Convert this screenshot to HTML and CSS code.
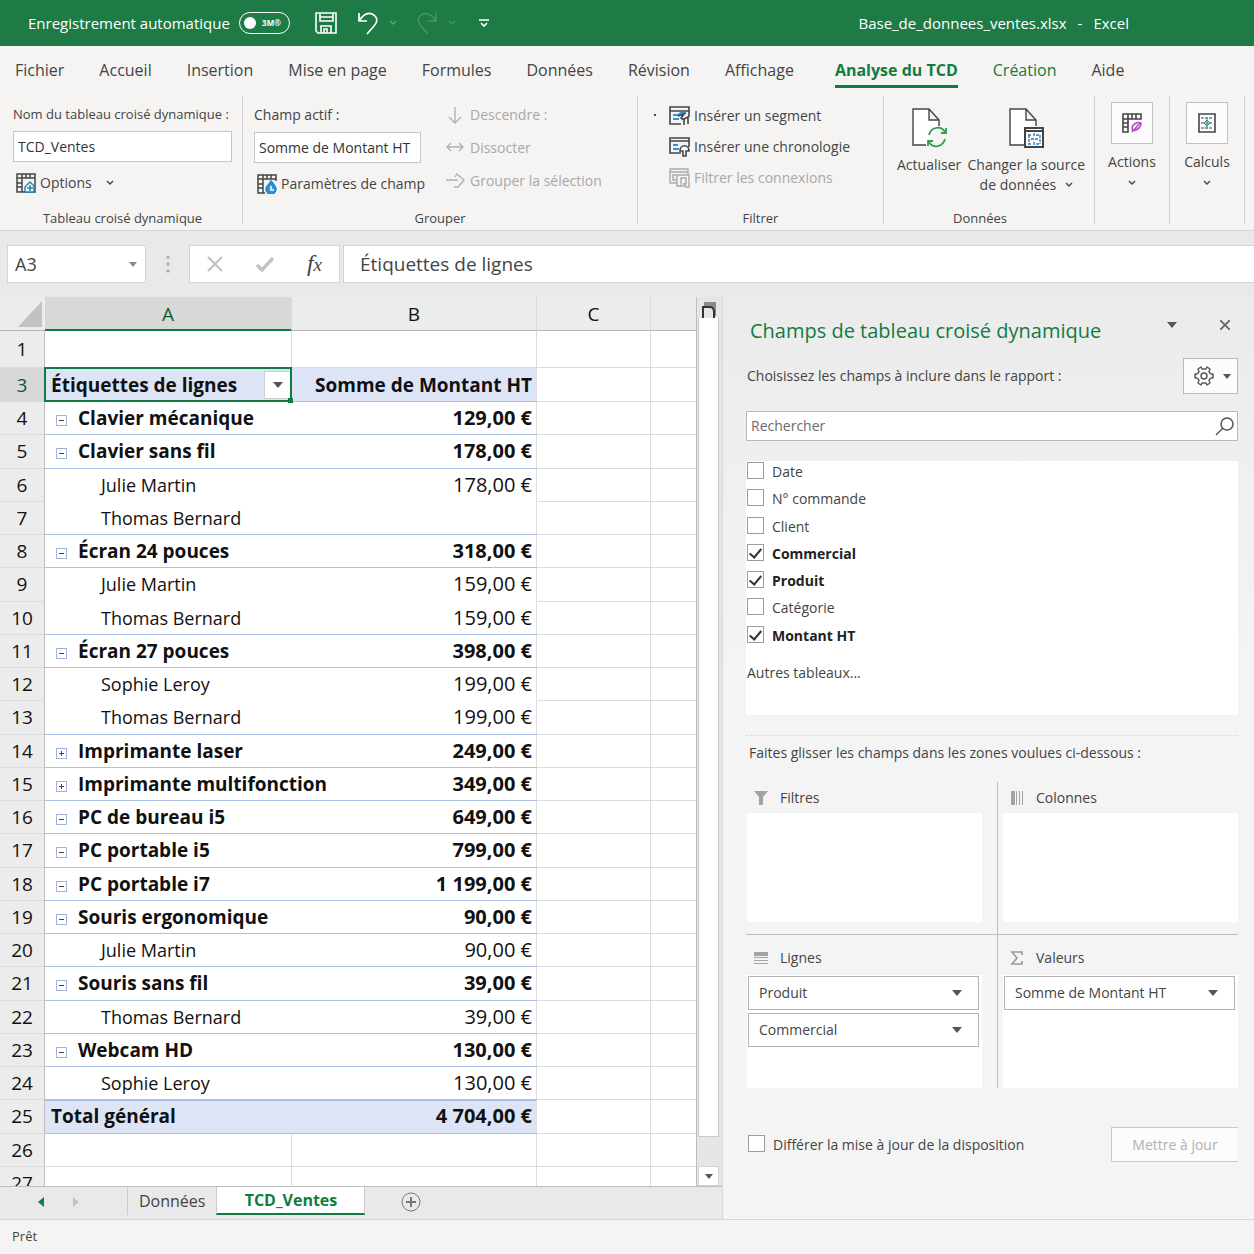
FILE: index.html
```html
<!DOCTYPE html>
<html lang="fr">
<head>
	<meta charset="UTF-8">
	<meta name="viewport" content="width=device-width, initial-scale=1">
	<title>Base_de_donnees_ventes.xlsx - Excel</title>
	<link rel="stylesheet" href="styles.css">
</head>
<body>
	<header class="titlebar">
		<span>Enregistrement automatique</span>
		<button class="autosave" aria-label="Enregistrement automatique"><span class="autosave-knob"></span><span class="autosave-text">3M®</span></button>
		<button class="save" aria-label="Enregistrer">
			<svg width="24" height="24" viewBox="0 0 24 24" fill="none" stroke="#fff" stroke-width="1.6"><path d="M2 2h20v20H4l-2-2zM6 2v8h13V2M7 22v-7h10v7M10 22v-4h3v4M6 6h13"/></svg>
		</button>
		<button class="undo" aria-label="Annuler">
			<svg width="22" height="24" viewBox="0 0 22 24" fill="none" stroke="#fff" stroke-width="1.7"><path d="M2 2v8h8M2 10C6 4 10 1 15 3c6 3 6 8 2 12l-7 8"/></svg>
		</button>
		<svg class="tb-chevron" width="8" height="6" viewBox="0 0 8 6" fill="none" stroke="#5fa37c" stroke-width="1.4"><path d="M1 1l3 3 3-3"/></svg>
		<button class="redo" aria-label="Rétablir">
			<svg width="22" height="24" viewBox="0 0 22 24" fill="none" stroke="#4a9469" stroke-width="1.4"><path d="M20 2v8h-8M20 10C16 4 12 1 7 3c-6 3-6 8-2 12l7 8"/></svg>
		</button>
		<svg class="tb-chevron" width="8" height="6" viewBox="0 0 8 6" fill="none" stroke="#4a9469" stroke-width="1.4"><path d="M1 1l3 3 3-3"/></svg>
		<button class="customize" aria-label="Personnaliser">
			<svg width="10" height="9" viewBox="0 0 10 9" fill="none" stroke="#fff" stroke-width="1.6"><path d="M0 1h10M2 4l3 3 3-3"/></svg>
		</button>
		<div class="file-name"><span>Base_de_donnees_ventes.xlsx</span><span>-</span><span>Excel</span></div>
	</header>

	<nav class="tabs">
		<a href="#">Fichier</a>
		<a href="#">Accueil</a>
		<a href="#">Insertion</a>
		<a href="#">Mise en page</a>
		<a href="#">Formules</a>
		<a href="#">Données</a>
		<a href="#">Révision</a>
		<a href="#">Affichage</a>
		<a href="#" class="active">Analyse du TCD</a>
		<a href="#" class="context">Création</a>
		<a href="#">Aide</a>
	</nav>

	<div class="ribbon">
		<section class="group group-pivot">
			<div class="group-body">
				<label for="pivot-name">Nom du tableau croisé dynamique :</label>
				<input id="pivot-name" type="text" value="TCD_Ventes">
				<button class="cmd">
					<svg width="20" height="20" viewBox="0 0 20 20" fill="none" stroke="#444" stroke-width="1.5"><path d="M1 1h18v18H1zM1 5h18M6 1v18M10 1v4M14 1v4M1 10h5M1 14h5"/><path d="M9 19h9v-6l-4-4-5 5z" fill="#fff" stroke="#1f86b8"/><path d="M11 15h6M14 12v6" stroke="#1f86b8"/></svg>
					Options
					<svg class="chevron" width="8" height="6" viewBox="0 0 8 6"><path d="M1 1l3 3 3-3"/></svg>
				</button>
			</div>
			<h2>Tableau croisé dynamique</h2>
		</section>

		<section class="group group-field">
			<div class="group-columns">
				<div class="group-body">
					<label for="active-field">Champ actif :</label>
					<input id="active-field" type="text" value="Somme de Montant HT">
					<button class="cmd">
						<svg width="20" height="20" viewBox="0 0 20 20" fill="none" stroke="#444" stroke-width="1.5"><path d="M19 7V1H1v18h7M1 5h18M6 1v18M10 1v4M14 1v4M1 10h5M1 14h5"/><path d="M14 7c3 4 5 5 5 8a5 5 0 0 1-10 0c0-3 3-4 5-8z" fill="#2b95dd" stroke="#1d84cf"/><path d="M14 12v4h3" stroke="#fff"/></svg>
						Paramètres de champ
					</button>
				</div>
				<div class="cmd-list drill">
					<button class="cmd" disabled>
						<svg width="20" height="20" viewBox="0 0 20 20" fill="none" stroke="#b0b0b0" stroke-width="1.3"><path d="M10 2v16M4 12l6 6 6-6"/></svg>
						Descendre :
					</button>
					<button class="cmd" disabled>
						<svg width="20" height="20" viewBox="0 0 20 20" fill="none" stroke="#b0b0b0" stroke-width="1.3"><path d="M2 9h16M6 5L2 9l4 4M14 5l4 4-4 4"/></svg>
						Dissocter
					</button>
					<button class="cmd" disabled>
						<svg width="20" height="20" viewBox="0 0 20 20" fill="none" stroke="#b0b0b0" stroke-width="1.3"><path d="M1 9h12M10 6l2-3 7 6-6 7H9"/></svg>
						Grouper la sélection
					</button>
				</div>
			</div>
			<h2>Grouper</h2>
		</section>

		<section class="group group-filter">
			<div class="cmd-list">
				<button class="cmd">
					<svg width="21" height="20" viewBox="0 0 21 20" fill="none" stroke="#444" stroke-width="1.6"><path d="M12 18H1V1h19v10M1 5h19"/><path d="M4 9h5l3-2h5M4 13h6" stroke="#2b95dd" stroke-width="2"/><path d="M9 10l6-2-3 4 3 2M15 19v-6l4-2v7"/></svg>
					Insérer un segment
				</button>
				<button class="cmd">
					<svg width="21" height="20" viewBox="0 0 21 20" fill="none" stroke="#444" stroke-width="1.6"><path d="M12 16H1V1h19v9M1 4h19"/><path d="M4 8h5M4 12h6" stroke="#2b95dd" stroke-width="2"/><path d="M14 19v-5h-3c0-7 9-7 9 0h-3v5z" fill="#fff"/></svg>
					Insérer une chronologie
				</button>
				<button class="cmd" disabled>
					<svg width="21" height="20" viewBox="0 0 21 20" fill="none" stroke="#ababab" stroke-width="1.4"><path d="M8 15H1V1h18v6M1 4h18M8 7H4v5h4M8 7h12v12h-4M8 7v11h4V10h5v6h-3M12 18h4v-3"/></svg>
					Filtrer les connexions
				</button>
			</div>
			<h2>Filtrer</h2>
		</section>

		<section class="group group-data">
			<div class="group-columns">
				<button class="big">
					<svg width="38" height="40" viewBox="0 0 38 40" fill="none" stroke="#444" stroke-width="1.4"><path d="M16 37H3V1h16l10 11v6M19 1v11h10" fill="#fff"/><g stroke="#2f9e4f" stroke-width="1.8"><path d="M19 27c2-8 12-10 16-3M36 20v5h-5M35 31c-2 8-12 10-16 3M18 38v-5h5"/></g></svg>
					<span>Actualiser</span>
				</button>
				<button class="big">
					<svg width="38" height="40" viewBox="0 0 38 40" fill="none" stroke="#444" stroke-width="1.4"><path d="M18 37H3V1h16l10 11v6M19 1v11h10" fill="#fff"/><path d="M18 20h18v19H18z" fill="#fff" stroke-width="2"/><path d="M18 23h18" stroke-width="2"/><path d="M21 27h3M29 27h4M22 27v9M33 27v9M21 36h4M29 36h4M27 25v4M27 34v4M24 31h7" stroke="#2680c8" stroke-dasharray="3 1"/></svg>
					<span>Changer la source<br>de données <svg class="chevron" width="8" height="6" viewBox="0 0 8 6"><path d="M1 1l3 3 3-3"/></svg></span>
				</button>
			</div>
			<h2>Données</h2>
		</section>

		<section class="group group-menu">
			<button class="big">
				<span class="tile"><svg width="20" height="20" viewBox="0 0 20 20" fill="none" stroke="#444" stroke-width="1.6"><path d="M1 1h18v5H1zM1 1v18h5V1M10 1v5M14 1v5M1 10h5M1 14h5"/><path d="M11 18c-3-5 3-10 8-8 0 5-4 7-8 8l7-8" stroke="#b64fc8"/></svg></span>
				<span>Actions</span>
				<svg class="chevron" width="8" height="6" viewBox="0 0 8 6"><path d="M1 1l3 3 3-3"/></svg>
			</button>
		</section>

		<section class="group group-menu">
			<button class="big">
				<span class="tile"><svg width="18" height="20" viewBox="0 0 18 20" fill="none" stroke="#444" stroke-width="1.6"><path d="M1 1h16v18H1z"/><path d="M3 5h12M3 10h12M3 15h12" stroke-width="1.2" stroke-dasharray="3 1"/><path d="M9 4v12M6 10l3-3 3 3-3 3z" stroke="#3b8f8c" stroke-width="1" fill="#8fd0cc"/></svg></span>
				<span>Calculs</span>
				<svg class="chevron" width="8" height="6" viewBox="0 0 8 6"><path d="M1 1l3 3 3-3"/></svg>
			</button>
		</section>
	</div>

	<div class="formula-bar">
		<div class="name-box">
			<input type="text" value="A3" aria-label="Zone Nom">
			<span class="caret light"></span>
		</div>
		<svg class="dots" width="4" height="18" viewBox="0 0 4 18" fill="#a6a6a6"><circle cx="2" cy="2" r="1.6"/><circle cx="2" cy="9" r="1.6"/><circle cx="2" cy="16" r="1.6"/></svg>
		<div class="formula-buttons">
			<button aria-label="Annuler"><svg width="18" height="16" viewBox="0 0 18 16" fill="none" stroke="#c3c3c3" stroke-width="2.4"><path d="M2 1l14 14M16 1L2 15"/></svg></button>
			<button aria-label="Entrer"><svg width="18" height="16" viewBox="0 0 18 16" fill="none" stroke="#c3c3c3" stroke-width="3.4"><path d="M1 9l5 5L17 2"/></svg></button>
			<button class="fx" aria-label="Insérer une fonction">f<small>x</small></button>
		</div>
		<input class="formula" type="text" value="Étiquettes de lignes" aria-label="Barre de formule">
	</div>

	<main class="workspace">
		<div class="book">
			<div class="sheet">
				<div class="grid">
					<table class="cells">
						<colgroup><col class="col-head"><col class="col-a"><col class="col-b"><col class="col-c"><col></colgroup>
						<thead>
							<tr><th class="corner"><svg width="24" height="26" viewBox="0 0 24 26"><path d="M24 0v26H0z" fill="#c2c2c2"/></svg></th><th class="selected">A</th><th>B</th><th>C</th><th></th></tr>
						</thead>
						<tbody>
							<tr class="first"><th>1</th><td></td><td></td><td></td><td></td></tr>
							<tr class="heading"><th class="selected">3</th><td class="active-cell"><div class="label">Étiquettes de lignes<button class="filter" aria-label="Filtrer les étiquettes"><span class="caret"></span></button></div></td><td>Somme de Montant HT</td><td></td><td></td></tr>
							<tr class="item"><th>4</th><td><button class="toggle minus" aria-label="Réduire"></button>Clavier mécanique</td><td>129,00 €</td><td></td><td></td></tr>
							<tr class="item"><th>5</th><td><button class="toggle minus" aria-label="Réduire"></button>Clavier sans fil</td><td>178,00 €</td><td></td><td></td></tr>
							<tr class="sub"><th>6</th><td>Julie Martin</td><td>178,00 €</td><td></td><td></td></tr>
							<tr class="sub last"><th>7</th><td>Thomas Bernard</td><td></td><td></td><td></td></tr>
							<tr class="item"><th>8</th><td><button class="toggle minus" aria-label="Réduire"></button>Écran 24 pouces</td><td>318,00 €</td><td></td><td></td></tr>
							<tr class="sub"><th>9</th><td>Julie Martin</td><td>159,00 €</td><td></td><td></td></tr>
							<tr class="sub last"><th>10</th><td>Thomas Bernard</td><td>159,00 €</td><td></td><td></td></tr>
							<tr class="item"><th>11</th><td><button class="toggle minus" aria-label="Réduire"></button>Écran 27 pouces</td><td>398,00 €</td><td></td><td></td></tr>
							<tr class="sub"><th>12</th><td>Sophie Leroy</td><td>199,00 €</td><td></td><td></td></tr>
							<tr class="sub last"><th>13</th><td>Thomas Bernard</td><td>199,00 €</td><td></td><td></td></tr>
							<tr class="item"><th>14</th><td><button class="toggle plus" aria-label="Développer"></button>Imprimante laser</td><td>249,00 €</td><td></td><td></td></tr>
							<tr class="item"><th>15</th><td><button class="toggle plus" aria-label="Développer"></button>Imprimante multifonction</td><td>349,00 €</td><td></td><td></td></tr>
							<tr class="item"><th>16</th><td><button class="toggle minus" aria-label="Réduire"></button>PC de bureau i5</td><td>649,00 €</td><td></td><td></td></tr>
							<tr class="item"><th>17</th><td><button class="toggle minus" aria-label="Réduire"></button>PC portable i5</td><td>799,00 €</td><td></td><td></td></tr>
							<tr class="item"><th>18</th><td><button class="toggle minus" aria-label="Réduire"></button>PC portable i7</td><td>1 199,00 €</td><td></td><td></td></tr>
							<tr class="item"><th>19</th><td><button class="toggle minus" aria-label="Réduire"></button>Souris ergonomique</td><td>90,00 €</td><td></td><td></td></tr>
							<tr class="sub last"><th>20</th><td>Julie Martin</td><td>90,00 €</td><td></td><td></td></tr>
							<tr class="item"><th>21</th><td><button class="toggle minus" aria-label="Réduire"></button>Souris sans fil</td><td>39,00 €</td><td></td><td></td></tr>
							<tr class="sub last"><th>22</th><td>Thomas Bernard</td><td>39,00 €</td><td></td><td></td></tr>
							<tr class="item"><th>23</th><td><button class="toggle minus" aria-label="Réduire"></button>Webcam HD</td><td>130,00 €</td><td></td><td></td></tr>
							<tr class="sub last"><th>24</th><td>Sophie Leroy</td><td>130,00 €</td><td></td><td></td></tr>
							<tr class="total"><th>25</th><td>Total général</td><td>4 704,00 €</td><td></td><td></td></tr>
							<tr><th>26</th><td></td><td></td><td></td><td></td></tr>
							<tr><th>27</th><td></td><td></td><td></td><td></td></tr>
						</tbody>
					</table>
				</div>
				<div class="scrollbar">
					<svg width="14" height="16" viewBox="0 0 14 16" fill="none"><path d="M2 0h12v14h-2V5H2z" fill="#8a8a8a"/><path d="M1 16V5h7c3 0 4 2 4 5v6" stroke="#333" stroke-width="2"/></svg>
					<div class="thumb"></div>
					<button aria-label="Défiler vers le bas"><span class="caret small"></span></button>
				</div>
			</div>
			<div class="sheet-tabs">
				<button class="prev" aria-label="Feuille précédente"><svg width="6" height="10" viewBox="0 0 6 10"><path d="M6 0v10L0 5z" fill="#107c41"/></svg></button>
				<button class="next" aria-label="Feuille suivante"><svg width="6" height="10" viewBox="0 0 6 10"><path d="M0 0v10l6-5z" fill="#c4c4c4"/></svg></button>
				<a href="#">Données</a>
				<a href="#" class="active">TCD_Ventes</a>
				<button class="add" aria-label="Nouvelle feuille"><svg width="20" height="20" viewBox="0 0 20 20" fill="none" stroke="#777"><circle cx="10" cy="10" r="9"/><path d="M10 5v10M5 10h10" stroke-width="2"/></svg></button>
			</div>
		</div>

		<aside class="pane">
			<div class="pane-title">
				<h1>Champs de tableau croisé dynamique</h1>
				<button class="pane-menu" aria-label="Options du volet"><span class="caret"></span></button>
				<button class="pane-close" aria-label="Fermer"><svg width="10" height="10" viewBox="0 0 10 10" stroke="#666" stroke-width="1.8"><path d="M0 0l10 10M10 0L0 10"/></svg></button>
			</div>
			<div class="pane-hint">
				<span>Choisissez les champs à inclure dans le rapport :</span>
				<button class="gear" aria-label="Outils">
					<svg width="20" height="20" viewBox="0 0 20 20" fill="none" stroke="#555" stroke-width="1.4" stroke-linejoin="round"><path d="M7 1l1 2h4l1-2 3 2-1 3 2 2h2v4h-2l-2 2 1 3-3 2-1-2H8l-1 2-3-2 1-3-2-2H1V8h2l2-2-1-3z"/><circle cx="10" cy="10" r="3"/></svg>
					<span class="caret small"></span>
				</button>
			</div>
			<div class="search">
				<input type="search" placeholder="Rechercher" aria-label="Rechercher">
				<svg width="20" height="20" viewBox="0 0 20 20" fill="none" stroke="#555" stroke-width="1.5"><circle cx="12" cy="8" r="6"/><path d="M8 12l-7 7"/></svg>
			</div>
			<div class="fields">
				<div class="field-list">
					<label><input type="checkbox">Date</label>
					<label><input type="checkbox">N° commande</label>
					<label><input type="checkbox">Client</label>
					<label><input type="checkbox" checked>Commercial</label>
					<label><input type="checkbox" checked>Produit</label>
					<label><input type="checkbox">Catégorie</label>
					<label><input type="checkbox" checked>Montant HT</label>
				</div>
				<a href="#">Autres tableaux...</a>
			</div>
			<p class="drag-hint">Faites glisser les champs dans les zones voulues ci-dessous :</p>
			<div class="zones">
				<section class="zone">
					<h3><svg width="14" height="14" viewBox="0 0 14 14" fill="#a3a3a3"><path d="M0 0h14L9 6v8H5V6z"/></svg>Filtres</h3>
					<div class="drop"></div>
				</section>
				<section class="zone">
					<h3><svg width="14" height="14" viewBox="0 0 14 14" fill="#a3a3a3"><path d="M1 0h4v14H1zM6 0h1v14H6zM9 0h1v14H9zM12 0h1v14h-1z"/></svg>Colonnes</h3>
					<div class="drop"></div>
				</section>
				<section class="zone">
					<h3><svg width="14" height="14" viewBox="0 0 14 14" fill="#a3a3a3"><path d="M0 1h14v4H0zM0 6h14v1H0zM0 9h14v1H0zM0 12h14v1H0z"/></svg>Lignes</h3>
					<div class="drop">
						<div class="pill"><select aria-label="Lignes 1"><option>Produit</option></select><span class="caret"></span></div>
						<div class="pill"><select aria-label="Lignes 2"><option>Commercial</option></select><span class="caret"></span></div>
					</div>
				</section>
				<section class="zone">
					<h3><svg width="14" height="14" viewBox="0 0 14 14" fill="none" stroke="#999" stroke-width="1.6"><path d="M12 4V1H2l5 6-5 6h10v-3"/></svg>Valeurs</h3>
					<div class="drop">
						<div class="pill"><select aria-label="Valeurs 1"><option>Somme de Montant HT</option></select><span class="caret"></span></div>
					</div>
				</section>
			</div>
			<div class="pane-footer">
				<label><input type="checkbox">Différer la mise à jour de la disposition</label>
				<button class="update" disabled>Mettre à jour</button>
			</div>
		</aside>
	</main>

	<footer class="status">Prêt</footer>
</body>
</html>
```
FILE: styles.css
```css
* {
	box-sizing: border-box;
}

body {
	margin: 0;
	height: 100vh;
	display: flex;
	flex-direction: column;
	overflow: hidden;
	background: #f5f4f3;
	color: #444;
	font: 14px/20px "Open Sans", "Noto Sans", sans-serif;
}

button,
input,
select {
	font: inherit;
	color: inherit;
	margin: 0;
}

button {
	padding: 0;
	border: 0;
	background: none;
}

h1, h2, h3, p {
	margin: 0;
	font-weight: 400;
}

a {
	color: inherit;
	text-decoration: none;
}

svg {
	display: block;
	flex: none;
}

.caret {
	flex: none;
	border: 5px solid transparent;
	border-top: 6px solid #555;
	border-bottom: 0;
}

.caret.small {
	border-width: 5px 4px 0;
}

.caret.light {
	border-top-color: #888;
	border-width: 5px 4px 0;
}

.chevron {
	fill: none;
	stroke: #444;
	stroke-width: 1.4;
}

/* title bar */
.titlebar {
	height: 46px;
	flex: none;
	display: flex;
	align-items: center;
	padding: 0 28px;
	background: #1e7b45;
	color: #fff;
	font-size: 15px;
}

.autosave {
	width: 51px;
	height: 22px;
	margin-left: 9px;
	padding: 0 8px 0 4px;
	display: flex;
	align-items: center;
	justify-content: space-between;
	border: 1px solid #fff;
	border-radius: 11px;
}

.autosave-knob {
	width: 12px;
	height: 12px;
	border-radius: 50%;
	background: #fff;
}

.autosave-text {
	font-size: 8px;
	line-height: 10px;
	font-weight: 700;
}

.save {
	margin-left: 24px;
}

.undo,
.redo {
	margin-left: 19px;
}

.tb-chevron {
	margin-left: 10px;
}

.customize {
	margin-left: 23px;
}

.file-name {
	display: flex;
	gap: 11px;
	margin-left: auto;
	margin-right: 97px;
}

/* ribbon tabs */
.tabs {
	height: 48px;
	flex: none;
	display: flex;
	align-items: flex-start;
	gap: 35px;
	padding: 9px 15px 0;
	font-size: 16px;
	line-height: 30px;
	white-space: nowrap;
}

.tabs a {
	height: 33px;
}

.tabs .active {
	margin-left: 6px;
	font-weight: 700;
	color: #107c41;
	border-bottom: 3px solid #107c41;
}

.tabs .context {
	color: #107c41;
}

/* ribbon */
.ribbon {
	height: 137px;
	flex: none;
	display: flex;
	padding: 2px 0 6px;
	border-bottom: 1px solid #d6d6d6;
	white-space: nowrap;
}

.group {
	display: flex;
	flex-direction: column;
	justify-content: space-between;
	border-right: 1px solid #cfcfcf;
}

.group h2 {
	font-size: 13px;
	line-height: 12px;
	text-align: center;
}

.group-pivot {
	width: 243px;
	padding: 8px 10px 0 13px;
}

.group-field {
	width: 395px;
	padding: 9px 0 0 11px;
}

.group-field h2 {
	padding-right: 11px;
}

.group-filter {
	position: relative;
	width: 246px;
	padding: 10px 0 0 31px;
}

.group-filter::before {
	content: "";
	position: absolute;
	top: 18px;
	left: 16px;
	width: 2px;
	height: 2px;
	background: #444;
}

.group-filter h2 {
	margin-left: -31px;
}

.group-data {
	width: 211px;
	padding: 12px 9px 0 13px;
}

.group-data h2 {
	padding-right: 22px;
}

.group-menu {
	width: 75px;
	padding: 6px 0 0;
}

.group-columns {
	display: flex;
	justify-content: space-between;
}

.group-body {
	display: flex;
	flex-direction: column;
	align-items: flex-start;
}

.group-body input {
	width: 100%;
	height: 31px;
	margin: 7px 0 11px;
	padding: 0 4px;
	border: 1px solid #c6c6c6;
	background: #fff;
	color: #333;
}

.group-pivot label {
	font-size: 13px;
}

.group-field .group-body {
	width: 167px;
}

.cmd {
	display: flex;
	align-items: center;
	gap: 4px;
	padding-left: 3px;
}

.cmd .chevron {
	margin-left: 10px;
}

.cmd:disabled {
	color: #a8a8a8;
}

.cmd-list {
	display: flex;
	flex-direction: column;
	align-items: flex-start;
	gap: 11px;
}

.drill {
	width: 192px;
	gap: 13px;
}

.drill .cmd {
	padding: 0;
	gap: 5px;
}

.group-filter .cmd {
	padding: 0;
}

.big {
	display: flex;
	flex-direction: column;
	align-items: center;
	justify-content: flex-start;
}

.big > svg {
	margin-bottom: 7px;
}

.big .chevron {
	margin: 8px 0 0;
}

.big span .chevron {
	display: inline-block;
	margin: 0 0 2px 5px;
}

.tile {
	width: 42px;
	height: 42px;
	margin-bottom: 8px;
	display: flex;
	align-items: center;
	justify-content: center;
	border: 1px solid #c2c2c2;
	background: #fcfcfc;
}

/* formula bar */
.formula-bar {
	height: 66px;
	flex: none;
	display: flex;
	align-items: flex-start;
	padding: 14px 0 0 7px;
	background: #e9e9e9;
	font-size: 19px;
}

.name-box,
.formula-buttons,
.formula {
	height: 38px;
	border: 1px solid #d4d4d4;
	background: #fff;
}

.name-box {
	width: 139px;
	display: flex;
	align-items: center;
	padding-right: 8px;
}

.name-box input {
	flex: 1;
	min-width: 0;
	padding: 0 7px;
	border: 0;
	background: none;
	font-size: 18px;
}

.dots {
	margin: 10px 19px 0 20px;
}

.formula-buttons {
	width: 151px;
	display: flex;
	align-items: center;
	justify-content: space-between;
	padding: 0 17px 0 16px;
}

.fx {
	font: italic 24px/30px "Liberation Serif", serif;
}

.fx small {
	font-size: 19px;
}

.formula {
	flex: 1;
	min-width: 0;
	margin-left: 3px;
	padding: 0 16px;
	border-right: 0;
}

/* sheet */
.workspace {
	flex: 1;
	min-height: 0;
	display: flex;
}

.book {
	flex: 1;
	min-width: 0;
	display: flex;
	flex-direction: column;
	background: #e9e9e9;
}

.sheet {
	flex: 1;
	min-height: 0;
	display: flex;
	border-bottom: 1px solid #bdbdbd;
}

.grid {
	flex: 1;
	min-width: 0;
	overflow: hidden;
	border-right: 1px solid #bdbdbd;
}

/* the last row runs on under the sheet tabs */
.cells {
	width: 100%;
	height: calc(100% + 14px);
	table-layout: fixed;
	border-collapse: separate;
	border-spacing: 0;
	color: #111;
	font-size: 19px;
	line-height: 26px;
	white-space: nowrap;
}

.col-head { width: 45px; }
.col-a { width: 247px; }
.col-b { width: 245px; }
.col-c { width: 114px; }

.cells th,
.cells td {
	padding: 0;
	border-right: 1px solid #dcdcdc;
	border-bottom: 1px solid #dcdcdc;
}

.cells th {
	font-weight: 400;
	background: #ececec;
}

.cells tr > :last-child {
	border-right: 0;
}

.cells td {
	background: #fff;
}

.cells thead th {
	height: 34px;
	border-bottom-color: #b4b4b4;
}

.cells tbody th {
	border-right-color: #bdbdbd;
}

.cells .corner {
	border-right: 0;
}

.corner svg {
	margin: 0 0 0 18px;
}

.cells th.selected {
	background: #d8d8d8;
	color: #0e5c30;
}

.cells thead th.selected {
	border-bottom-color: #107c41;
	box-shadow: inset 0 -1px #107c41;
}

.cells .first th {
	height: 37px;
}

.cells .heading th {
	height: 34px;
}

.heading td,
.item td,
.total td {
	font-weight: 700;
}

.sub td {
	font-size: 18px;
}

.cells td:nth-child(3) {
	padding-right: 4px;
	text-align: right;
}

.item td:nth-child(3),
.sub td:nth-child(3),
.total td:nth-child(3) {
	font-size: 20px;
}

.heading td:nth-child(-n+3),
.item td:nth-child(-n+3),
.last td:nth-child(-n+3),
.total td:nth-child(-n+3) {
	border-bottom-color: #a9c0e6;
}

.sub:not(.last) td:nth-child(-n+3) {
	border-bottom-color: #fff;
}

.item td:nth-child(2),
.sub td:nth-child(2),
.total td:nth-child(2) {
	border-right: 0;
}

.heading td:nth-child(-n+3),
.total td:nth-child(-n+3) {
	background: #dde4f6;
}

.total td:nth-child(-n+3) {
	box-shadow: inset 0 1px #a9c0e6;
}

.cells .item td:nth-child(2) {
	padding-left: 11px;
}

.cells .sub td:nth-child(2) {
	padding-left: 56px;
}

.cells .total td:nth-child(2),
.cells .heading td:nth-child(2) {
	padding-left: 6px;
}

.active-cell {
	position: relative;
}

/* selection frame and fill handle */
.active-cell::before {
	content: "";
	position: absolute;
	inset: -1px;
	border: 2px solid #107c41;
	pointer-events: none;
}

.active-cell::after {
	content: "";
	position: absolute;
	right: -2px;
	bottom: -2px;
	width: 5px;
	height: 5px;
	background: #107c41;
}

.label {
	display: flex;
	align-items: center;
	justify-content: space-between;
}

.filter {
	width: 27px;
	height: 28px;
	display: flex;
	align-items: center;
	justify-content: center;
	border: 1px solid #d0d0d0;
	background: #fff;
}

.toggle {
	width: 11px;
	height: 11px;
	margin-right: 11px;
	border: 1px solid #9db5d9;
	background: linear-gradient(#444, #444) center / 5px 1px no-repeat #fff;
}

.toggle.plus {
	background: linear-gradient(#444, #444) center / 5px 1px no-repeat, linear-gradient(#444, #444) center / 1px 5px no-repeat #fff;
}

.scrollbar {
	width: 25px;
	flex: none;
	display: flex;
	flex-direction: column;
	padding: 5px 3px 0 1px;
	background: #e6e6e6;
}

.scrollbar > svg {
	margin-left: 4px;
}

.thumb {
	flex: 1;
	margin-bottom: 29px;
	border: 1px solid #c9c9c9;
	border-top: 0;
	background: #fff;
}

.scrollbar button {
	height: 20px;
	display: flex;
	align-items: center;
	justify-content: center;
	border: 1px solid #d4d4d4;
	background: #fff;
}

.sheet-tabs {
	height: 32px;
	flex: none;
	display: flex;
	align-items: flex-start;
	font-size: 16px;
	line-height: 28px;
}

.sheet-tabs button {
	height: 30px;
}

.sheet-tabs .prev {
	margin-left: 38px;
}

.sheet-tabs .next {
	margin-left: 29px;
	margin-right: 48px;
}

.sheet-tabs a {
	height: 28px;
	padding: 0 11px;
	border-left: 1px solid #cbcbcb;
}

.sheet-tabs .active {
	width: 149px;
	padding: 0;
	text-align: center;
	font-weight: 700;
	line-height: 26px;
	color: #107c41;
	background: #fff;
	border-right: 1px solid #cbcbcb;
	border-bottom: 2px solid #107c41;
}

.sheet-tabs .add {
	margin-left: 36px;
}

/* field pane */
.pane {
	width: 532px;
	flex: none;
	padding: 20px 16px 0 23px;
	border-left: 1px solid #d8d8d8;
	background: linear-gradient(#ebebeb, #f4f4f4 40%);
	overflow: hidden;
}

.pane-title {
	display: flex;
	align-items: flex-start;
	padding: 0 8px 0 4px;
}

.pane-title h1 {
	flex: 1;
	font-size: 20px;
	line-height: 28px;
	color: #107c41;
}

.pane-title button {
	height: 16px;
}

.pane-title .caret {
	display: block;
}

.pane-close {
	margin-left: 43px;
}

.pane-hint {
	display: flex;
	align-items: center;
	justify-content: space-between;
	margin-top: 13px;
	padding-left: 1px;
}

.gear {
	width: 55px;
	height: 36px;
	display: flex;
	align-items: center;
	justify-content: center;
	gap: 9px;
	padding-left: 4px;
	border: 1px solid #b8b8b8;
	background: #fcfcfc;
}

.search {
	height: 30px;
	margin-top: 17px;
	padding: 0 2px 0 4px;
	display: flex;
	align-items: center;
	border: 1px solid #b8b8b8;
	background: #fff;
}

.search input {
	flex: 1;
	min-width: 0;
	padding: 0;
	border: 0;
	background: none;
	outline: 0;
}

.search input::placeholder {
	color: #6b6b6b;
}

.fields {
	height: 254px;
	margin-top: 20px;
	padding-left: 1px;
	background: #fff;
}

.field-list {
	height: 192px;
	padding-top: 1px;
	display: grid;
}

.field-list label,
.pane-footer label {
	display: flex;
	align-items: flex-start;
	gap: 8px;
}

.field-list label:has(:checked) {
	font-weight: 700;
	color: #222;
}

input[type="checkbox"] {
	appearance: none;
	width: 17px;
	height: 17px;
	flex: none;
	border: 1px solid #9c9c9c;
	background: #fff;
	display: flex;
	align-items: flex-start;
	justify-content: center;
}

input[type="checkbox"]:checked::before {
	content: "";
	width: 5px;
	height: 10px;
	margin-top: 1px;
	border: solid #333;
	border-width: 0 2px 2px 0;
	transform: rotate(40deg);
}

.fields a {
	display: block;
	margin-top: 10px;
}

.drag-hint {
	margin-top: 20px;
	padding: 7px 0 0 3px;
	border-top: 1px dotted #d2d2d2;
}

.zones {
	display: grid;
	grid-template-columns: 251fr 241fr;
	margin-top: 19px;
}

.zone {
	padding: 0 15px 12px 1px;
}

.zone:nth-child(even) {
	padding: 0 0 12px 5px;
	border-left: 1px solid #bdbdbd;
}

.zone:nth-child(-n+2) {
	border-bottom: 1px solid #bdbdbd;
}

.zone:nth-child(n+3) {
	padding-bottom: 0;
}

.zone h3 {
	height: 31px;
	display: flex;
	align-items: center;
	gap: 12px;
	padding-left: 7px;
	font-size: 14px;
}

.zone:nth-child(n+3) h3 {
	height: 40px;
	padding-top: 6px;
}

.drop {
	height: 109px;
	background: #fff;
}

.zone:nth-child(n+3) .drop {
	height: 113px;
	padding: 1px 3px 0 1px;
}

.pill {
	height: 34px;
	margin-bottom: 3px;
	display: flex;
	align-items: center;
	border: 1px solid #b4b4b4;
	background: #fff;
	position: relative;
}

.pill select {
	appearance: none;
	width: 100%;
	height: 100%;
	padding: 0 10px;
	border: 0;
	background: none;
}

.pill .caret {
	position: absolute;
	right: 16px;
	pointer-events: none;
}

.pane-footer {
	display: flex;
	align-items: center;
	justify-content: space-between;
	margin-top: 39px;
	padding-left: 2px;
}

.update {
	width: 127px;
	height: 35px;
	border: 1px solid #c9c9c9;
	border-right: 0;
	background: #fcfcfc;
	color: #b0b0b0;
}

.status {
	height: 35px;
	flex: none;
	padding: 6px 12px;
	border-top: 1px solid #d6d6d6;
	font-size: 13px;
}
```
